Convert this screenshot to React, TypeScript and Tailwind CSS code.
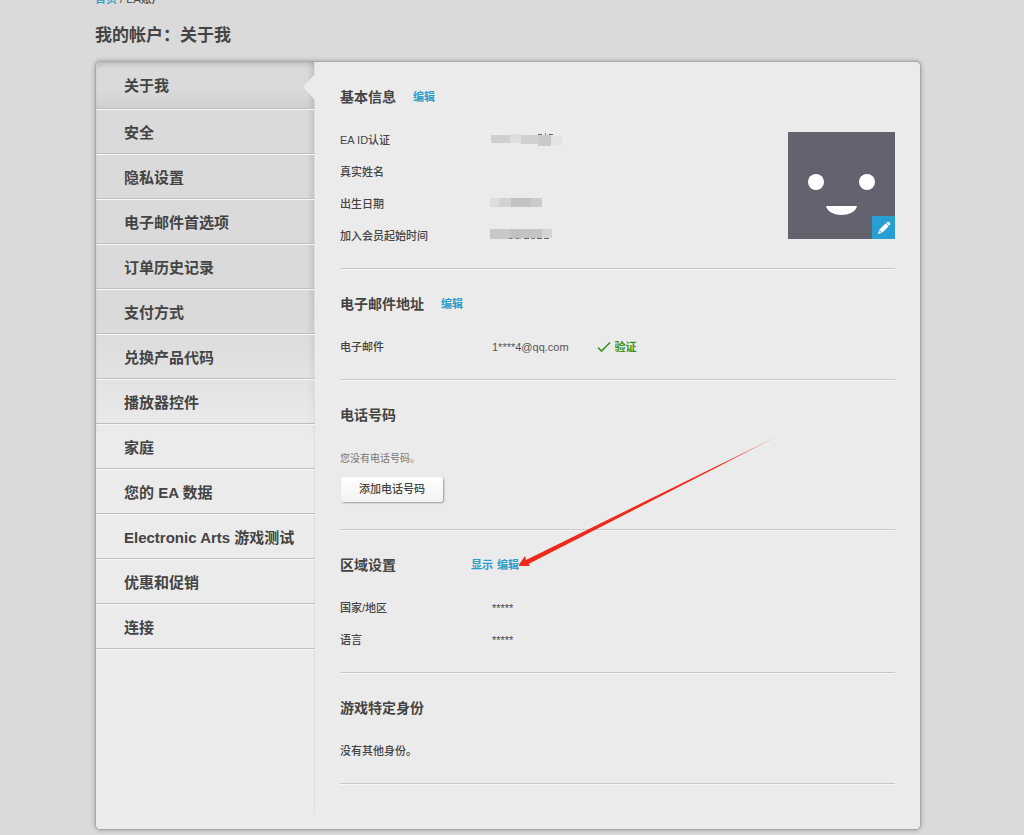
import { useState } from 'react';
import type { ReactNode } from 'react';

// --- Data ---
const menuItems = [
  '关于我',
  '安全',
  '隐私设置',
  '电子邮件首选项',
  '订单历史记录',
  '支付方式',
  '兑换产品代码',
  '播放器控件',
  '家庭',
  '您的 EA 数据',
  'Electronic Arts 游戏测试',
  '优惠和促销',
  '连接',
];

interface MosaicProps {
  label: string;
  cells: { x: number; y: number; w: number; h: number; fill: string }[];
}

// Censored value, drawn as a strip of grey blocks
const Mosaic = ({ label, cells }: MosaicProps) => (
  <svg width="76" height="16" viewBox="0 0 76 16" role="img" aria-label={label} className="-ml-0.5">
    {cells.map((c, i) => (
      <rect key={i} x={c.x} y={c.y} width={c.w} height={c.h} fill={c.fill} />
    ))}
  </svg>
);

const idCells = [
  { x: 1, y: 3, w: 19, h: 8, fill: '#cfcfcf' },
  { x: 20, y: 2, w: 11, h: 9, fill: '#dedede' },
  { x: 31, y: 3, w: 17, h: 9, fill: '#d0d0d0' },
  { x: 48, y: 3, w: 13, h: 11, fill: '#c9c9c9' },
  { x: 61, y: 4, w: 11, h: 9, fill: '#e3e3e3' },
  { x: 48, y: 2, w: 4, h: 1, fill: '#707070' },
  { x: 55, y: 1, w: 1, h: 2, fill: '#808080' },
  { x: 59, y: 2, w: 4, h: 1, fill: '#606060' },
];

const birthCells = [
  { x: 0, y: 2, w: 9, h: 9, fill: '#dedede' },
  { x: 9, y: 2, w: 12, h: 9, fill: '#d2d2d2' },
  { x: 21, y: 2, w: 20, h: 9, fill: '#c3c3c3' },
  { x: 41, y: 2, w: 11, h: 9, fill: '#cbcbcb' },
];

const joinCells = [
  { x: 0, y: 1, w: 20, h: 10, fill: '#c8c8c8' },
  { x: 20, y: 1, w: 12, h: 10, fill: '#c1c1c1' },
  { x: 32, y: 1, w: 20, h: 9, fill: '#c4c4c4' },
  { x: 52, y: 1, w: 10, h: 9, fill: '#d4d4d4' },
  { x: 19, y: 10, w: 3, h: 1, fill: '#777777' },
  { x: 26, y: 10, w: 3, h: 1, fill: '#777777' },
  { x: 34, y: 10, w: 5, h: 1, fill: '#666666' },
  { x: 41, y: 10, w: 4, h: 1, fill: '#777777' },
  { x: 47, y: 10, w: 5, h: 1, fill: '#666666' },
  { x: 54, y: 10, w: 5, h: 1, fill: '#666666' },
];

// --- Building blocks ---
const Section = ({ title, actions, children }: { title: string; actions?: ReactNode; children: ReactNode }) => (
  <section className="border-b border-[#c8c8c8] pt-[25px] pb-4 shadow-[0_1px_0_#f6f6f6]">
    <div className="mb-[17px] flex h-5 items-center">
      <h2 className="text-[14px] font-bold text-[#444]">{title}</h2>
      {actions}
    </div>
    {children}
  </section>
);

const Row = ({ label, children }: { label: string; children?: ReactNode }) => (
  <div className="flex h-8 items-center">
    <dt className="w-[152px] shrink-0 font-medium">{label}</dt>
    <dd className="flex items-center">{children}</dd>
  </div>
);

const ActionLink = ({ className, children }: { className?: string; children: ReactNode }) => (
  <a href="#" className={`text-[11px] font-bold text-[#2a9cc8] hover:underline ${className ?? ''}`}>
    {children}
  </a>
);

const PointerArrow = () => (
  <svg
    width="262"
    height="134"
    viewBox="0 0 262 134"
    aria-hidden="true"
    className="pointer-events-none absolute bottom-1 left-full"
  >
    <defs>
      <linearGradient id="arrowFade" x1="0" y1="1" x2="1" y2="0">
        <stop offset="0.75" stopColor="#ee2a1c" />
        <stop offset="1" stopColor="#ee2a1c" stopOpacity="0.25" />
      </linearGradient>
    </defs>
    <path d="M-1 131 L6 121 L7 125 L261 0 L9.500 129 L11 131 Z" fill="url(#arrowFade)" />
  </svg>
);

const Avatar = () => (
  <div className="relative size-[107px] bg-[#62636f]">
    <svg width="107" height="107" viewBox="0 0 107 107" role="img" aria-label="头像">
      <circle cx="28" cy="50" r="8" fill="#fff" />
      <circle cx="79" cy="50" r="8" fill="#fff" />
      <path d="M38 74 H69 C68 80 60 83 53.500 83 S39 80 38 74 Z" fill="#fff" />
    </svg>
    <button
      type="button"
      aria-label="编辑头像"
      className="absolute right-0 bottom-0 flex size-[23px] items-center justify-center bg-[#279fd3]"
    >
      <svg width="14" height="14" viewBox="0 0 14 14" fill="#fff">
        <path d="M1 13 L2 9.500 L4.500 12 Z" />
        <path d="M2.200 8.800 L8.800 2.300 L11.700 5.200 L5.200 11.800 Z" />
        <path d="M9.300 1.800 L10.400 0.900 Q11.200 0.300 12.200 1.100 L12.900 1.800 Q13.700 2.800 13.100 3.600 L12.200 4.700 Z" />
      </svg>
    </button>
  </div>
);

const SideMenu = () => {
  const [active, setActive] = useState(menuItems[0]);

  return (
    <nav className="relative w-[219px] shrink-0 rounded-l-[5px]">
      <div className="absolute inset-x-0 top-0 h-[370px] rounded-tl-[5px] bg-linear-to-b from-[#dadada] from-70% to-[#ebebeb] shadow-[inset_0_5px_6px_-4px_#aaa]" />
      {/* soft shade along the edge of the content pane */}
      <div className="absolute top-0 right-0 h-[385px] w-2 bg-linear-to-r from-transparent to-black/10 mask-b-from-60%" />
      <div className="absolute top-0 right-0 bottom-4 w-px bg-[#dedede]" />
      <ul className="relative">
        {menuItems.map((item) => (
          <li
            key={item}
            className="group relative h-[45px] border-b border-[#bdbdbd] shadow-[0_1px_0_#f8f8f8] first:h-[47px] first:bg-linear-to-b first:from-transparent first:from-60% first:to-black/5"
          >
            <a
              href="#"
              onClick={() => setActive(item)}
              aria-current={active === item ? 'page' : undefined}
              className="flex h-full items-center pt-[5px] pl-7 text-[15px] font-bold text-[#444] group-first:pt-[3px]"
            >
              {item}
            </a>
            {active === item && (
              <svg width="12" height="26" viewBox="0 0 12 26" aria-hidden="true" className="absolute top-3 right-0">
                <path d="M12 0 V26 L0 13 Z" fill="#ebebeb" />
              </svg>
            )}
          </li>
        ))}
      </ul>
    </nav>
  );
};

export default function App() {
  return (
    <div className="min-h-screen overflow-hidden bg-[#dadada] pr-2 pb-1.5 font-['Liberation_Sans','Noto_Sans_CJK_SC',sans-serif] text-[11px] text-[#444]">
      <div className="mx-auto max-w-[826px]">
        <div className="-mt-[9px] h-4 text-[11px] leading-4 font-medium">
          <a href="#" className="text-[#2a9cc8]">
            首页
          </a>{' '}
          / EA账户
        </div>
        <h1 className="mt-[17px] mb-[13px] text-[17px] leading-6 font-bold">我的帐户：关于我</h1>

        <div className="flex rounded-[5px] border border-[#aaa] bg-[#ebebeb] shadow-[0_0_4px_#999]">
          <SideMenu />

          <main className="min-w-0 grow px-[25px] pb-[45px]">
            <div className="relative">
              <Section title="基本信息" actions={<ActionLink className="ml-[17px]">编辑</ActionLink>}>
                <dl>
                  <Row label="EA ID认证">
                    <Mosaic label="EA ID" cells={idCells} />
                  </Row>
                  <Row label="真实姓名" />
                  <Row label="出生日期">
                    <Mosaic label="出生日期" cells={birthCells} />
                  </Row>
                  <Row label="加入会员起始时间">
                    <Mosaic label="加入时间" cells={joinCells} />
                  </Row>
                </dl>
              </Section>
              <div className="absolute top-[70px] right-0">
                <Avatar />
              </div>
            </div>

            <Section title="电子邮件地址" actions={<ActionLink className="ml-[17px]">编辑</ActionLink>}>
              <dl>
                <Row label="电子邮件">
                  <span className="text-[#555]">1****4@qq.com</span>
                  <span className="ml-7 flex items-center gap-1 font-bold text-[#3f9420]">
                    <svg width="14" height="12" viewBox="0 0 14 12" fill="none" stroke="currentColor" strokeWidth="1.7">
                      <path d="M1 6.500 L4.500 10 L13 1.500" />
                    </svg>
                    验证
                  </span>
                </Row>
              </dl>
            </Section>

            <Section title="电话号码">
              <p className="flex h-8 items-center text-[10px] text-[#777]">您没有电话号码。</p>
              <button
                type="button"
                className="mt-[3px] mb-[11px] ml-px block h-[25px] rounded-[3px] bg-linear-to-b from-white to-[#f2f2f2] px-[18px] font-medium shadow-[1px_1px_2px_#999]"
              >
                添加电话号码
              </button>
            </Section>

            <Section
              title="区域设置"
              actions={
                <div className="relative ml-[75px] flex gap-1">
                  <ActionLink>显示</ActionLink>
                  <ActionLink>编辑</ActionLink>
                  <PointerArrow />
                </div>
              }
            >
              <dl>
                <Row label="国家/地区">*****</Row>
                <Row label="语言">*****</Row>
              </dl>
            </Section>

            <Section title="游戏特定身份">
              <p className="flex h-8 items-center font-medium">没有其他身份。</p>
            </Section>
          </main>
        </div>
      </div>
    </div>
  );
}
